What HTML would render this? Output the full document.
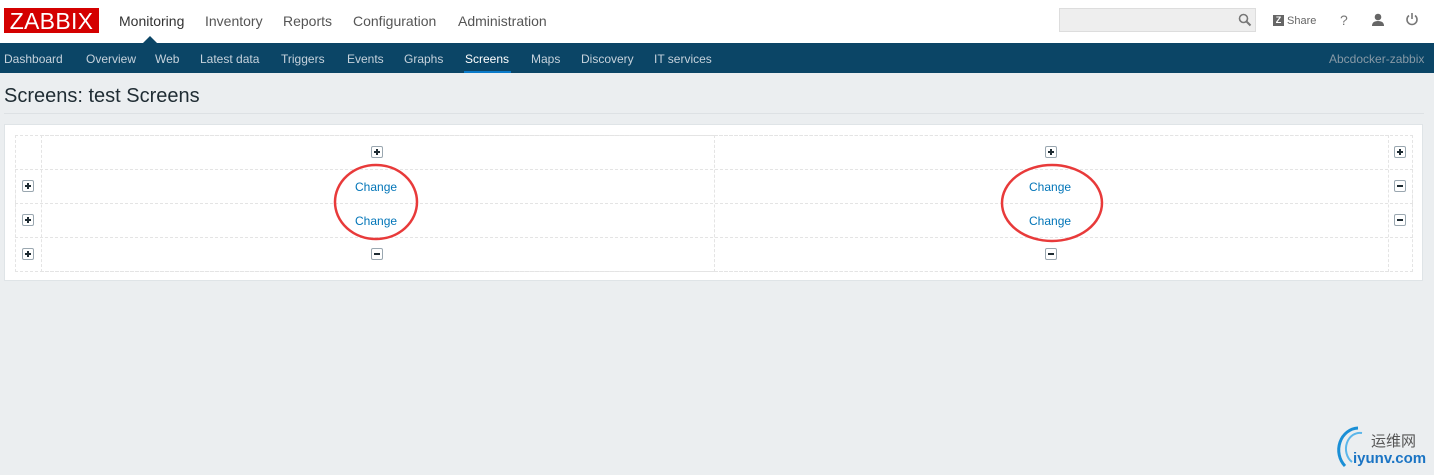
<!DOCTYPE html>
<html><head><style>
body{margin:0;width:1434px;height:475px;background:#ebeef0;font-family:"Liberation Sans",sans-serif;position:relative;overflow:hidden}
.hdr{position:absolute;left:0;top:0;width:1434px;height:43px;background:#fff}
.logo{position:absolute;left:4px;top:8px;width:95px;height:25px;background:#d40000;color:#fff;font-size:23px;line-height:26px;text-align:center;letter-spacing:0.3px}
.top{position:absolute;top:13px;font-size:14px;color:#555}
.nav{position:absolute;left:0;top:43px;width:1434px;height:30px;background:#0b4566}
.nav span{position:absolute;top:9px;font-size:12px;color:#c6d2dc}
.search{position:absolute;left:1059px;top:8px;width:197px;height:24px;background:#eee;border:1px solid #ddd;box-sizing:border-box}
h1{position:absolute;left:4px;top:85px;margin:0;font-weight:normal;font-size:20px;color:#1f2c33}
.hr{position:absolute;left:4px;top:113px;width:1420px;height:1px;background:#dde1e4}
.box{position:absolute;left:4px;top:124px;width:1419px;height:157px;background:#fff;border:1px solid #dfe4e7;box-sizing:border-box}
.cell{position:absolute;border:1px dashed #e4e4e4;box-sizing:border-box}
.b{position:absolute;width:12px;height:12px;border:1px solid #9aa7b0;border-radius:2px;box-sizing:border-box;background:#fff}
.b::before{content:"";position:absolute;left:2px;top:4px;width:6px;height:2px;background:#1f2c33}
.b.p::after{content:"";position:absolute;left:4px;top:2px;width:2px;height:6px;background:#1f2c33}
.ch{position:absolute;font-size:12px;color:#0275b8}
</style></head><body>
<div class="hdr">
<div class="logo">ZABBIX</div>
<span class="top" style="left:119px;color:#333">Monitoring</span>
<span class="top" style="left:205px">Inventory</span>
<span class="top" style="left:283px">Reports</span>
<span class="top" style="left:353px">Configuration</span>
<span class="top" style="left:458px">Administration</span>
<div class="search"></div>
<svg style="position:absolute;left:1238px;top:13px" width="14" height="14"><circle cx="5.5" cy="5.5" r="4" fill="none" stroke="#777" stroke-width="1.6"/><line x1="8.5" y1="8.5" x2="12.5" y2="12.5" stroke="#777" stroke-width="2"/></svg>
<div style="position:absolute;left:1273px;top:15px;width:11px;height:11px;background:#666;color:#fff;font-size:9px;font-weight:bold;line-height:11px;text-align:center">Z</div>
<span style="position:absolute;left:1287px;top:15px;font-size:11px;color:#666">Share</span>
<span style="position:absolute;left:1340px;top:12px;font-size:14px;color:#777">?</span>
<svg style="position:absolute;left:1371px;top:13px" width="14" height="14"><circle cx="7" cy="4" r="3.3" fill="#666"/><path d="M1 13 Q1 8 7 8 Q13 8 13 13Z" fill="#666"/></svg>
<svg style="position:absolute;left:1405px;top:12px" width="14" height="14"><path d="M4 3.5 A5 5 0 1 0 10 3.5" fill="none" stroke="#777" stroke-width="1.6"/><line x1="7" y1="1" x2="7" y2="7" stroke="#777" stroke-width="1.6"/></svg>
<svg style="position:absolute;left:142px;top:36px" width="16" height="8"><path d="M0 8 L8 0 L16 8Z" fill="#0b4566"/></svg>
</div>
<div class="nav">
<span style="left:4px">Dashboard</span><span style="left:86px">Overview</span><span style="left:155px">Web</span><span style="left:200px">Latest data</span><span style="left:281px">Triggers</span><span style="left:347px">Events</span><span style="left:404px">Graphs</span><span style="left:465px;color:#fff">Screens</span><span style="left:531px">Maps</span><span style="left:581px">Discovery</span><span style="left:654px">IT services</span>
<span style="left:1329px;color:#8799a6">Abcdocker-zabbix</span>
<div style="position:absolute;left:464px;top:28px;width:47px;height:2px;background:#0a7ac9"></div>
</div>
<h1>Screens: test Screens</h1>
<div class="hr"></div>
<div class="box"></div>
<div class="cell" style="left:15px;top:135px;width:1398px;height:137px"></div>
<div class="cell" style="left:41px;top:135px;width:674px;height:137px"></div>
<div class="cell" style="left:714px;top:135px;width:675px;height:137px"></div>
<div class="cell" style="left:15px;top:169px;width:1398px;height:35px"></div>
<div class="cell" style="left:15px;top:203px;width:1398px;height:35px"></div>
<div class="b p" style="left:371px;top:146px"></div>
<div class="b p" style="left:1045px;top:146px"></div>
<div class="b p" style="left:1394px;top:146px"></div>
<div class="b p" style="left:22px;top:180px"></div>
<div class="b p" style="left:22px;top:214px"></div>
<div class="b p" style="left:22px;top:248px"></div>
<div class="b" style="left:1394px;top:180px"></div>
<div class="b" style="left:1394px;top:214px"></div>
<div class="b" style="left:371px;top:248px"></div>
<div class="b" style="left:1045px;top:248px"></div>
<span class="ch" style="left:355px;top:180px">Change</span>
<span class="ch" style="left:355px;top:214px">Change</span>
<span class="ch" style="left:1029px;top:180px">Change</span>
<span class="ch" style="left:1029px;top:214px">Change</span>
<svg style="position:absolute;left:0;top:0" width="1434" height="475">
<ellipse cx="376" cy="202" rx="41" ry="37" fill="none" stroke="#e83a3a" stroke-width="2.5"/>
<ellipse cx="1052" cy="203" rx="50" ry="38" fill="none" stroke="#e83a3a" stroke-width="2.5"/>
<path d="M1345 466 A20 22 0 0 1 1358 428" fill="none" stroke="#1a8fd6" stroke-width="3"/>
<path d="M1352 462 A14 16 0 0 1 1362 433" fill="none" stroke="#5bb6ea" stroke-width="2"/>
</svg>
<span style="position:absolute;left:1371px;top:430px;font-size:15px;color:#555;font-family:'Liberation Sans','Noto Sans CJK SC',sans-serif">运维网</span>
<span style="position:absolute;left:1353px;top:450px;font-size:15px;color:#1a74c4;font-weight:bold">iyunv.com</span>
</body></html>
